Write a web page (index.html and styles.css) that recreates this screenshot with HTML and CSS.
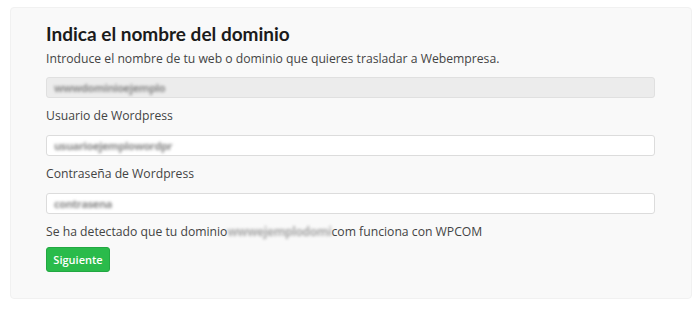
FILE: index.html
```html
<!DOCTYPE html>
<html lang="es">
<head>
<meta charset="utf-8">
<link rel="stylesheet" href="styles.css">
</head>
<body>
<div class="panel">
  <h2 class="title">Indica el nombre del dominio</h2>
  <p class="line intro">Introduce el nombre de tu web o dominio que quieres trasladar a Webempresa.</p>
  <div class="field disabled"><span class="blur">wwwdominioejemplo</span></div>
  <p class="line label">Usuario de Wordpress</p>
  <div class="field"><span class="blur">usuarioejemplowordpr</span></div>
  <p class="line label">Contraseña de Wordpress</p>
  <div class="field"><span class="blur">contrasena</span></div>
  <p class="line detect">Se ha detectado que tu dominio<span class="blur inline">wwwejemplodomi</span>com funciona con WPCOM</p>
  <button class="btn">Siguiente</button>
</div>
</body>
</html>
```
FILE: styles.css
```css
html, body {
  margin: 0;
  padding: 0;
  background: #ffffff;
}
body {
  font-family: "Open Sans", "Liberation Sans", sans-serif;
  color: #444;
}
.panel {
  margin: 7px 8px 0 10px;
  height: 292px;
  box-sizing: border-box;
  background: #f9f9f9;
  border: 1px solid #f1f1f1;
  border-radius: 4px;
  padding: 14px 36px 0 35px;
  display: flex;
  flex-direction: column;
  align-items: flex-start;
}
.title {
  margin: 0;
  font-family: "Lato", "Liberation Sans", sans-serif;
  font-weight: 700;
  font-size: 19px;
  line-height: 24px;
  color: #1b1b1b;
}
.line {
  margin: 0;
  font-size: 12.2px;
  line-height: 20px;
  color: #444;
}
.intro { margin-top: 3px; }
.label { margin-top: 8px; }
.detect { margin-top: 8px; }
.field {
  margin-top: 8px;
  align-self: stretch;
  height: 21px;
  box-sizing: border-box;
  border: 1px solid #dcdcdc;
  border-radius: 3px;
  background: #fff;
  display: flex;
  align-items: center;
  padding-left: 7px;
  overflow: hidden;
}
.label + .field { margin-top: 9px; }
.field.disabled {
  background: #ececec;
  border-color: #e0e0e0;
}
.blur {
  font-size: 11px;
  color: #8a8a8a;
  filter: blur(1.4px);
  letter-spacing: -0.4px;
  font-weight: 700;
}
.blur.inline {
  font-size: 12px;
  color: #a8a8a8;
}
.btn {
  margin-top: 5px;
  width: 64px;
  height: 25px;
  padding: 0;
  border: 1px solid #22a842;
  border-radius: 3px;
  background: #2abb4b;
  color: #fff;
  font-family: "Open Sans", "Liberation Sans", sans-serif;
  font-size: 11px;
  font-weight: 600;
  cursor: pointer;
}
```
